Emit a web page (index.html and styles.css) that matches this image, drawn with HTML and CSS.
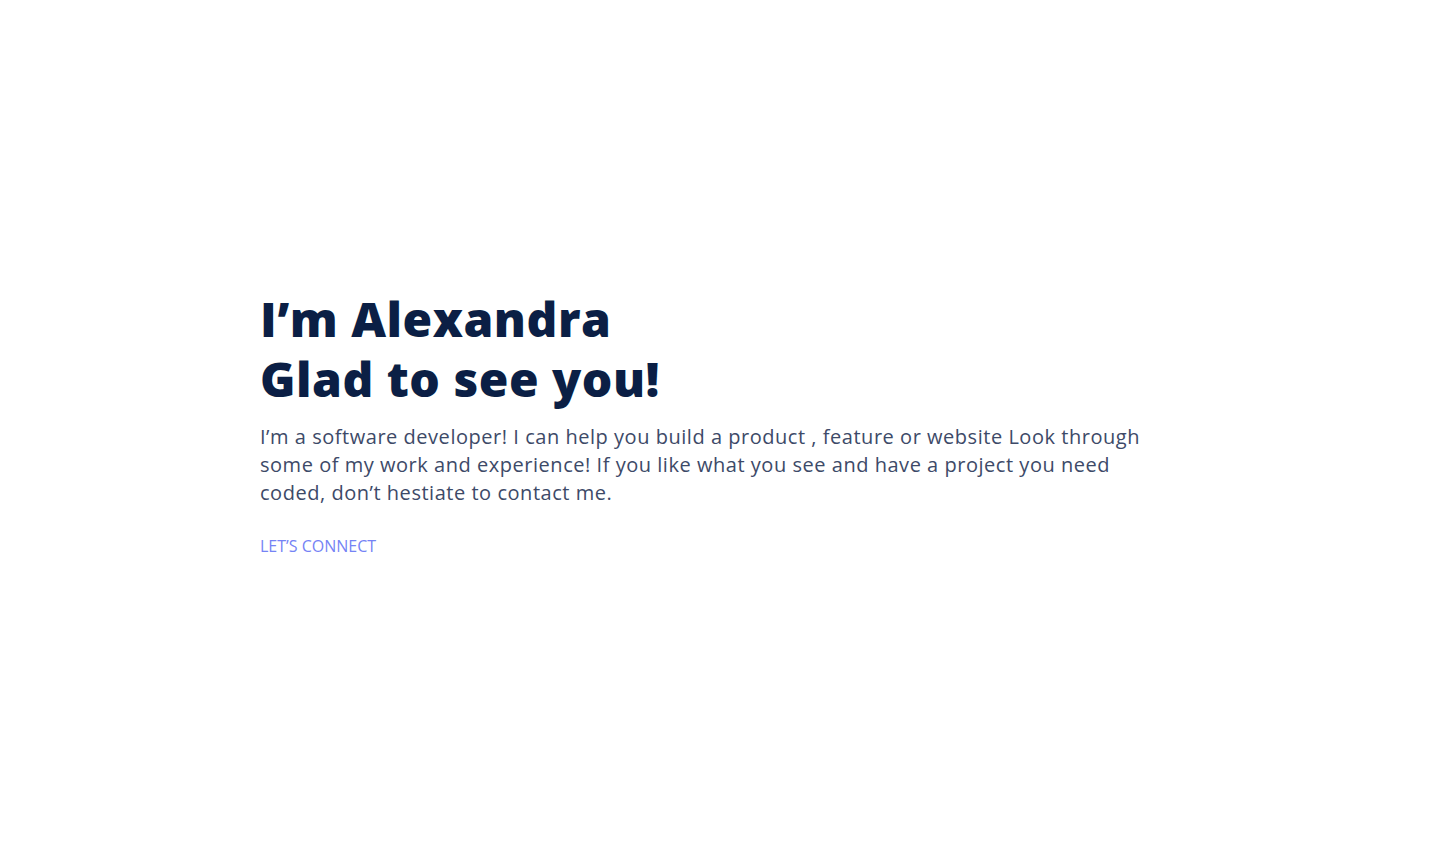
FILE: index.html
```html
<!DOCTYPE html>
<html lang="en">
<head>
<meta charset="utf-8">
<title>Alexandra</title>
<link rel="stylesheet" href="styles.css">
</head>
<body>
<main class="hero">
  <div class="container">
    <h1 class="title">I’m Alexandra<br>Glad to see you!</h1>
    <p class="intro">I’m a software developer! I can help you build a product , feature or website Look through some of my work and experience! If you like what you see and have a project you need coded, don’t hestiate to contact me.</p>
    <a class="connect" href="#">LET’S CONNECT</a>
  </div>
</main>
</body>
</html>
```
FILE: styles.css
```css
* { box-sizing: border-box; }
html, body { margin: 0; padding: 0; background: #ffffff; }
body { font-family: "Open Sans", "DejaVu Sans", sans-serif; }
.hero {
  min-height: 100vh;
  display: flex;
  align-items: center;
  justify-content: center;
}
.container {
  width: 920px;
  display: flex;
  flex-direction: column;
  align-items: flex-start;
}
.title {
  margin: 0;
  font-size: 48px;
  line-height: 60px;
  font-weight: 800;
  letter-spacing: 0.5px;
  color: #0b1f45;
}
.intro {
  margin: 14px 0 0;
  font-size: 20px;
  line-height: 28px;
  letter-spacing: 0.53px;
  color: #3d4a68;
}
.connect {
  margin-top: 28px;
  font-size: 16px;
  font-weight: 500;
  color: #7583f5;
  text-decoration: none;
}
```
